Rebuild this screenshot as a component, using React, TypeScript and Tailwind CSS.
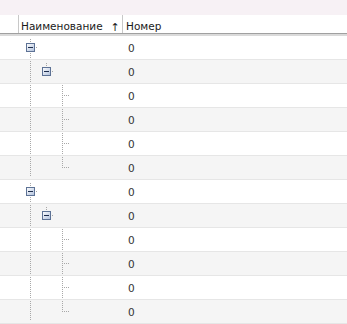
import React from "react";

type Kind = "root" | "mid" | "leaf" | "last";

const DOT = "#a8a8a8";

function VLine({ x, y1, y2 }: { x: number; y1: number; y2: number }) {
  return (
    <line
      x1={x + 0.5}
      x2={x + 0.5}
      y1={y1}
      y2={y2 + 1}
      stroke={DOT}
      strokeWidth={1}
      strokeDasharray="1 1"
      shapeRendering="crispEdges"
    />
  );
}

function HLine({ y, x1, x2 }: { y: number; x1: number; x2: number }) {
  return (
    <line
      x1={x1}
      x2={x2 + 1}
      y1={y + 0.5}
      y2={y + 0.5}
      stroke={DOT}
      strokeWidth={1}
      strokeDasharray="1 1"
      shapeRendering="crispEdges"
    />
  );
}

function Expander({ x, y }: { x: number; y: number }) {
  return (
    <g shapeRendering="crispEdges">
      <defs>
        <linearGradient id="expg" x1="0" y1="0" x2="1" y2="1">
          <stop offset="0" stopColor="#ffffff" />
          <stop offset="1" stopColor="#aebfdb" />
        </linearGradient>
      </defs>
      <rect x={x + 0.5} y={y + 0.5} width={8} height={8} fill="url(#expg)" stroke="#5d7295" />
      <rect x={x + 2} y={y + 4} width={5} height={1} fill="#1c2c4c" />
    </g>
  );
}

function TreeCell({ kind }: { kind: Kind }) {
  return (
    <svg width={123} height={23} className="block shrink-0">
      {kind === "root" && (
        <>
          <VLine x={30} y1={3} y2={6} />
          <VLine x={30} y1={17} y2={22} />
          <HLine y={11} x1={36} x2={37} />
          <Expander x={26} y={7} />
        </>
      )}
      {kind === "mid" && (
        <>
          <VLine x={30} y1={1} y2={22} />
          <VLine x={46} y1={3} y2={6} />
          <HLine y={11} x1={52} x2={53} />
          <Expander x={42} y={7} />
        </>
      )}
      {kind === "leaf" && (
        <>
          <VLine x={30} y1={1} y2={22} />
          <VLine x={62} y1={1} y2={22} />
          <HLine y={11} x1={64} x2={68} />
        </>
      )}
      {kind === "last" && (
        <>
          <VLine x={30} y1={1} y2={20} />
          <VLine x={62} y1={1} y2={11} />
          <HLine y={11} x1={64} x2={68} />
        </>
      )}
    </svg>
  );
}

const rows: Kind[] = [
  "root",
  "mid",
  "leaf",
  "leaf",
  "leaf",
  "last",
  "root",
  "mid",
  "leaf",
  "leaf",
  "leaf",
  "last",
];

export default function App() {
  return (
    <div
      className="w-[347px] h-[324px] overflow-hidden bg-white text-[10.5px]"
      style={{ fontFamily: '"DejaVu Sans", Tahoma, sans-serif' }}
    >
      <div className="h-[15px] bg-[#f7f1f5]" />
      <div className="flex h-[19px] border-b border-[#a0a0a0] text-[#1a1a1a]">
        <div className="w-[19px] border-r border-[#c8c8c8]" />
        <div className="flex w-[104px] items-center border-r border-[#c8c8c8] pl-[2px] pt-[6px]">
          <span>Наименование</span>
          <span className="ml-[8px] text-[11px] leading-none">↑</span>
        </div>
        <div className="flex flex-1 items-center pl-[3px] pt-[6px]">Номер</div>
      </div>
      <div className="h-[2px] bg-[#dadada]" />
      {rows.map((k, i) => (
        <div
          key={i}
          className={`flex h-[24px] items-start border-b border-[#e6e6e6] ${
            i % 2 === 1 ? "bg-[#f5f5f5]" : "bg-white"
          }`}
        >
          <TreeCell kind={k} />
          <div className="pl-[5px] pt-[6px] leading-[12px] text-[#333]">0</div>
        </div>
      ))}
    </div>
  );
}
